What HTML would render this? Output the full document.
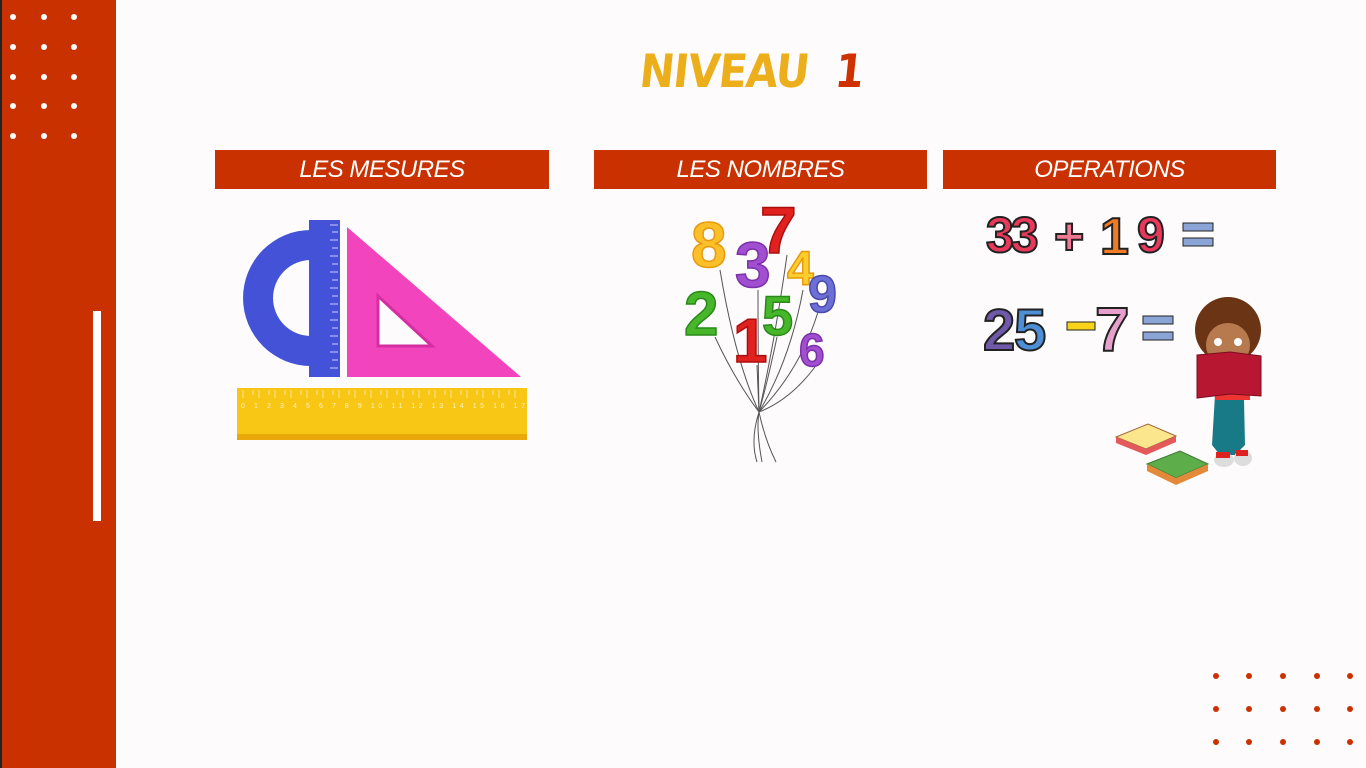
<!DOCTYPE html>
<html><head><meta charset="utf-8"><style>
*{margin:0;padding:0}
body{width:1366px;height:768px;background:#fdfbfc;position:relative;overflow:hidden;font-family:"Liberation Sans",sans-serif}
.side{position:absolute;left:0;top:0;width:116px;height:768px;background:#c93100;border-left:2px solid #222;box-sizing:border-box}
.bar{position:absolute;top:150px;height:39px;background:#c93100;color:#fff;font-style:italic;font-size:24px;text-align:center;line-height:39px;letter-spacing:-0.5px}
</style></head><body>
<div class="side"></div>
<div style="position:absolute;left:93px;top:311px;width:8px;height:210px;background:#fff"></div>
<svg style="position:absolute;left:0;top:0" width="1366" height="768">
<g fill="#fff">
<circle cx="13" cy="17" r="3"/><circle cx="44" cy="17" r="3"/><circle cx="74" cy="17" r="3"/>
<circle cx="13" cy="47" r="3"/><circle cx="44" cy="47" r="3"/><circle cx="74" cy="47" r="3"/>
<circle cx="13" cy="77" r="3"/><circle cx="44" cy="77" r="3"/><circle cx="74" cy="77" r="3"/>
<circle cx="13" cy="106" r="3"/><circle cx="44" cy="106" r="3"/><circle cx="74" cy="106" r="3"/>
<circle cx="13" cy="136" r="3"/><circle cx="44" cy="136" r="3"/><circle cx="74" cy="136" r="3"/>
</g>
<g fill="#c93100">
<circle cx="1216" cy="676" r="3"/><circle cx="1249" cy="676" r="3"/><circle cx="1283" cy="676" r="3"/><circle cx="1317" cy="676" r="3"/><circle cx="1350" cy="676" r="3"/>
<circle cx="1216" cy="709" r="3"/><circle cx="1249" cy="709" r="3"/><circle cx="1283" cy="709" r="3"/><circle cx="1317" cy="709" r="3"/><circle cx="1350" cy="709" r="3"/>
<circle cx="1216" cy="742" r="3"/><circle cx="1249" cy="742" r="3"/><circle cx="1283" cy="742" r="3"/><circle cx="1317" cy="742" r="3"/><circle cx="1350" cy="742" r="3"/>
</g>
<path d="M311 230 A68 68 0 0 0 311 366 Z M311 260 L311 336 A38 38 0 0 1 311 260 Z" fill="#4352d6" fill-rule="evenodd"/>
<rect x="309" y="220" width="31" height="157" fill="#4352d6"/>
<g stroke="#c8cdf5" stroke-width="1"><path d="M330 225h8M332 232h6M330 240h8M332 248h6M330 256h8M332 264h6M330 272h8M332 280h6M330 288h8M332 296h6M330 304h8M332 312h6M330 320h8M332 328h6M330 336h8M332 344h6M330 352h8M332 360h6M330 368h8"/></g>
<path d="M347 227 L347 377 L521 377 Z M378 296 L378 346 L432 346 Z" fill="#f245bd" fill-rule="evenodd"/>
<path d="M378 296 L378 346 L432 346 Z" fill="none" stroke="#d52ea2" stroke-width="3"/>
<rect x="237" y="388" width="290" height="52" fill="#f8c614"/>
<rect x="237" y="434" width="290" height="6" fill="#e9a908"/>
<g stroke="#fde79a" stroke-width="1"><path d="M243 390v8M253 390v5M259 390v8M269 390v5M275 390v8M285 390v5M291 390v8M301 390v5M307 390v8M317 390v5M323 390v8M333 390v5M339 390v8M349 390v5M355 390v8M365 390v5M371 390v8M381 390v5M387 390v8M397 390v5M403 390v8M413 390v5M419 390v8M429 390v5M435 390v8M445 390v5M451 390v8M461 390v5M467 390v8M477 390v5M483 390v8M493 390v5M499 390v8M509 390v5M515 390v8"/></g>
<g fill="#fff3c4" font-size="7" font-family="Liberation Sans"><text x="241" y="408" textLength="284">0 1 2 3 4 5 6 7 8 9 10 11 12 13 14 15 16 17</text></g>
<g stroke="#555" stroke-width="1" fill="none">
<path d="M720 270 Q735 360 759 412"/><path d="M758 290 Q758 360 759 412"/><path d="M787 255 Q775 340 759 412"/>
<path d="M803 290 Q790 360 759 412"/><path d="M818 312 Q800 370 759 412"/><path d="M715 337 Q735 380 759 412"/>
<path d="M757 365 L759 412"/><path d="M777 337 Q768 380 759 412"/><path d="M815 367 Q790 400 759 412"/>
<path d="M759 412 Q750 440 757 462M759 412 Q765 440 776 462M759 412 Q756 430 762 462"/>
</g>
<g font-family="Liberation Sans" font-weight="bold" stroke-width="1.5">
<text x="691" y="267" font-size="64" fill="#fbbf2a" stroke="#e79a0e">8</text>
<text x="735" y="287" font-size="64" fill="#a24ed0" stroke="#7b30a8">3</text>
<text x="760" y="253" font-size="66" fill="#e0211d" stroke="#aa0f0f">7</text>
<text x="787" y="285" font-size="48" fill="#fbcd2e" stroke="#e79a0e">4</text>
<text x="808" y="312" font-size="52" fill="#6b6fd6" stroke="#4a4aaa">9</text>
<text x="684" y="335" font-size="62" fill="#47b62a" stroke="#2a8a19">2</text>
<text x="733" y="362" font-size="62" fill="#e0211d" stroke="#aa0f0f">1</text>
<text x="762" y="335" font-size="56" fill="#47b62a" stroke="#2a8a19">5</text>
<text x="799" y="366" font-size="46" fill="#a24ed0" stroke="#7b30a8">6</text>
</g>
<g font-family="Liberation Sans" font-weight="bold" stroke="#222" stroke-width="2">
<text x="986" y="252" font-size="50" fill="#e9395a" letter-spacing="-3">33</text>
<text x="1054" y="254" font-size="52" fill="#f17892">+</text>
<text x="1100" y="254" font-size="52" fill="#ef7b25">1</text>
<text x="1137" y="252" font-size="50" fill="#e9395a">9</text>
<text x="983" y="350" font-size="58" fill="#6e5aa8">2</text>
<text x="1014" y="350" font-size="58" fill="#4d8ed4">5</text>
<text x="1095" y="351" font-size="62" fill="#e79fcb">7</text>
</g>
<g stroke="#222" stroke-width="1">
<rect x="1183" y="223" width="30" height="8" fill="#8aa4d6"/><rect x="1183" y="238" width="30" height="8" fill="#8aa4d6"/>
<rect x="1067" y="322" width="28" height="8" fill="#f7d31a"/>
<rect x="1143" y="316" width="30" height="8" fill="#8aa4d6"/><rect x="1143" y="332" width="30" height="8" fill="#8aa4d6"/>
</g>
<circle cx="1228" cy="330" r="33" fill="#6b3414"/>
<ellipse cx="1228" cy="345" rx="22" ry="22" fill="#b77a4e"/>
<circle cx="1218" cy="342" r="4" fill="#fff"/><circle cx="1238" cy="342" r="4" fill="#fff"/>
<path d="M1235 393 L1215 395 L1212 445 L1220 455 L1235 455 L1245 445 L1244 400 Z" fill="#177a86"/>
<rect x="1215" y="390" width="35" height="10" fill="#e33"/>
<path d="M1197 355 L1230 352 L1261 356 L1261 396 L1230 394 L1197 398 Z" fill="#b71730" stroke="#7a0e1d"/>
<ellipse cx="1224" cy="460" rx="10" ry="7" fill="#ddd"/><ellipse cx="1243" cy="458" rx="9" ry="8" fill="#ddd"/>
<path d="M1216 452h14v6h-14zM1236 450h12v6h-12z" fill="#d22"/>
<path d="M1116 437 L1148 424 L1176 436 L1146 449 Z" fill="#fbe58d" stroke="#a0683a"/>
<path d="M1116 437 L1146 449 L1176 436 L1176 442 L1146 455 L1116 443 Z" fill="#e45a5a"/>
<path d="M1147 464 L1180 451 L1208 464 L1176 478 Z" fill="#5dae4a" stroke="#3a7a30"/>
<path d="M1147 464 L1176 478 L1208 464 L1208 471 L1176 485 L1147 471 Z" fill="#e38a3a"/>
</svg>
<div style="position:absolute;left:640px;top:44px;width:220px;font-family:'DejaVu Sans Condensed','DejaVu Sans',sans-serif;font-weight:bold;font-size:46px;letter-spacing:-1px;color:#ecae1a;white-space:nowrap;transform:skewX(-6deg)">NIVEAU &#160;<span style="color:#cf3200">1</span></div>
<div class="bar" style="left:215px;width:334px">LES MESURES</div>
<div class="bar" style="left:594px;width:333px">LES NOMBRES</div>
<div class="bar" style="left:943px;width:333px">OPERATIONS</div>
</body></html>
